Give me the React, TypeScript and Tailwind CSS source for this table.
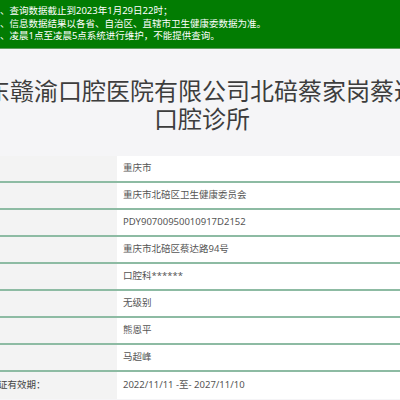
const rows: { label: string; value: string }[] = [
  { label: "", value: "重庆市" },
  { label: "", value: "重庆市北碚区卫生健康委员会" },
  { label: "", value: "PDY90700950010917D2152" },
  { label: "", value: "重庆市北碚区蔡达路94号" },
  { label: "", value: "口腔科******" },
  { label: "", value: "无级别" },
  { label: "", value: "熊恩平" },
  { label: "", value: "马超峰" },
  { label: "证有效期：", value: "2022/11/11 -至- 2027/11/10" },
];

const notices = [
  "、查询数据截止到2023年1月29日22时；",
  "、信息数据结果以各省、自治区、直辖市卫生健康委数据为准。",
  "、凌晨1点至凌晨5点系统进行维护，不能提供查询。",
];

export default function App() {
  return (
    <div
      className="h-[400px] w-[400px] overflow-hidden bg-[#f5f5f7]"
      style={{ fontFamily: '"Noto Sans", "Noto Sans CJK SC", sans-serif' }}
    >
      {/* 顶部提示 */}
      <div className="h-[49px] border-b border-[#5c9e5c] bg-[#027c02] pt-[5px] text-[9.5px] leading-[12.6px] text-white">
        {notices.map((t) => (
          <div key={t} className="whitespace-nowrap">
            {t}
          </div>
        ))}
      </div>

      {/* 机构名称 */}
      <div className="ml-[-16px] mt-[28px] w-[436px] text-center text-[24px] leading-[28px] text-[#3d3d3d]">
        东赣渝口腔医院有限公司北碚蔡家岗蔡达口腔诊所
      </div>

      {/* 信息表 */}
      <div className="mt-[23px] text-[9.5px] text-[#555]">
        {rows.map((r, i) => (
          <div
            key={i}
            className={
              "flex h-[27px] items-center " +
              (i < rows.length - 1 ? "border-b-2 border-[#8dbba3]" : "")
            }
          >
            <div className="flex h-full w-[117px] items-center bg-[#f3f3f3]">
              <span className="ml-[-2px] whitespace-nowrap text-[#444]">{r.label}</span>
            </div>
            <div className="flex h-full flex-1 items-center bg-white pl-[6px]">
              <span className="whitespace-nowrap">{r.value}</span>
            </div>
          </div>
        ))}
      </div>
    </div>
  );
}
